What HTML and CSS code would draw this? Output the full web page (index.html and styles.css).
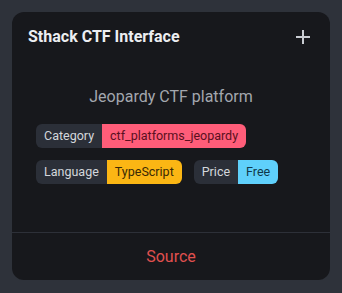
FILE: index.html
```html
<!DOCTYPE html>
<html>
<head>
<meta charset="utf-8">
<link rel="stylesheet" href="styles.css">
</head>
<body>
<div class="card">
  <div class="card-header">
    <h2 class="title">Sthack CTF Interface</h2>
    <svg class="plus" width="14" height="14" viewBox="0 0 14 14"><path d="M7 0v14M0 7h14" stroke="#c9ccd2" stroke-width="2"/></svg>
  </div>
  <div class="card-body">
    <p class="desc">Jeopardy CTF platform</p>
    <div class="badges">
      <span class="badge"><span class="key">Category</span><span class="val pink">ctf_platforms_jeopardy</span></span>
    </div>
    <div class="badges">
      <span class="badge"><span class="key">Language</span><span class="val yellow">TypeScript</span></span>
      <span class="badge"><span class="key">Price</span><span class="val blue">Free</span></span>
    </div>
  </div>
  <div class="card-footer">
    <a class="source">Source</a>
  </div>
</div>
</body>
</html>
```
FILE: styles.css
```css
html, body { margin: 0; padding: 0; }
body {
  width: 342px;
  height: 293px;
  background: #2e323a;
  font-family: Roboto, "Liberation Sans", sans-serif;
  padding: 12px;
  box-sizing: border-box;
}
.card {
  width: 318px;
  height: 268px;
  background: #17181c;
  border-radius: 12px;
  display: flex;
  flex-direction: column;
}
.card-header {
  display: flex;
  align-items: center;
  justify-content: space-between;
  padding: 13px 20px 0 16px;
  height: 24px;
}
.title {
  margin: 0;
  font-size: 16px;
  font-weight: 700;
  color: #eceef1;
  line-height: 24px;
}
.plus { display: block; }
.card-body {
  flex: 1;
  padding: 0 24px;
}
.desc {
  margin: 36px 0 15px;
  text-align: center;
  color: #a3a7ae;
  font-size: 16px;
  line-height: 24px;
}
.badges {
  display: flex;
  gap: 12px;
  margin-bottom: 12px;
}
.badge {
  display: inline-flex;
  border-radius: 6px;
  overflow: hidden;
  font-size: 12.5px;
  line-height: 24px;
  height: 24px;
}
.key {
  background: #2b2f38;
  color: #d4d7dc;
  padding: 0 8px;
}
.val { padding: 0 8px; }
.pink { background: #ff5d79; color: #5a1020; }
.yellow { background: #fbb614; color: #3a2a05; }
.blue { background: #5fd0fb; color: #10384a; }
.card-footer {
  border-top: 1px solid #2d3038;
  height: 47px;
  display: flex;
  align-items: center;
  justify-content: center;
}
.source {
  color: #e0504f;
  font-size: 16px;
}
```
